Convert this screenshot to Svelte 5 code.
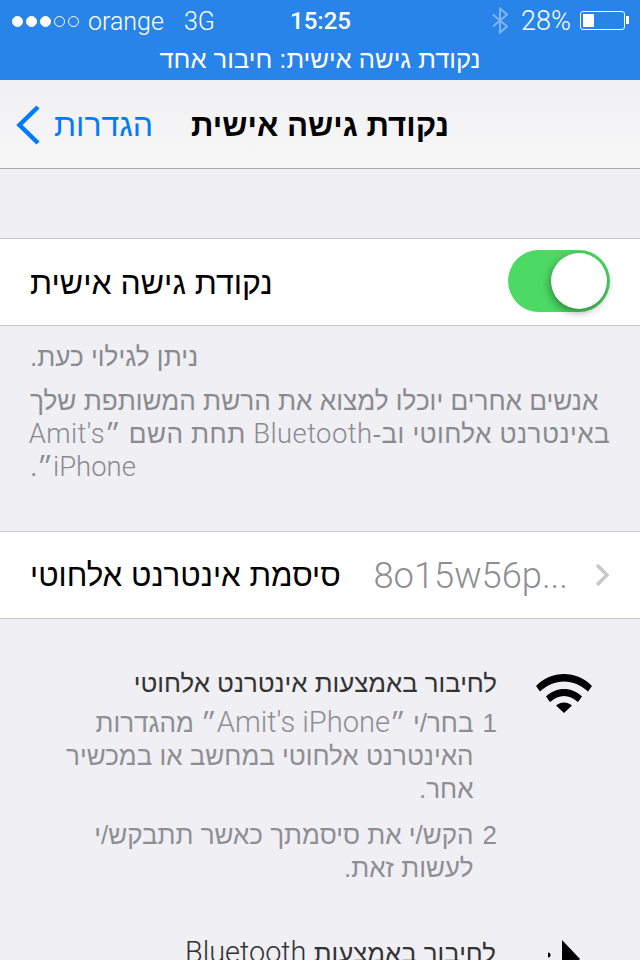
<div class="screen">
  <header class="status">
    <div class="status-left">
      <span class="signal">
        {#each [1, 2, 3, 4, 5] as n}
          <i class:on={n <= 3}></i>
        {/each}
      </span>
      <span class="carrier">orange</span>
      <span class="network">3G</span>
    </div>
    <div class="clock">15:25</div>
    <div class="status-right">
      <svg class="bt" width="16" height="27" viewBox="0 0 16 27" fill="none" stroke="#fff" stroke-width="2">
        <path d="M1 7.5 L15 19.5 L8 25.5 V1.5 L15 7.5 L1 19.5" />
      </svg>
      <span class="percent">28%</span>
      <span class="battery"><b></b></span>
    </div>
  </header>

  <div class="tether" dir="rtl">נקודת גישה אישית: חיבור אחד</div>

  <nav class="navbar">
    <div class="back">
      <svg width="26" height="40" viewBox="0 0 26 40" fill="none" stroke="#007aff" stroke-width="4.5">
        <path d="M23 2 L4.5 20 L23 38" />
      </svg>
      <span dir="rtl">הגדרות</span>
    </div>
    <h1 dir="rtl">נקודת גישה אישית</h1>
  </nav>

  <section class="cell first">
    <div class="switch"><span class="knob"></span></div>
    <span class="cell-title" dir="rtl">נקודת גישה אישית</span>
  </section>

  <div class="notes" dir="rtl">
    <p>ניתן לגילוי כעת.</p>
    <p>אנשים אחרים יוכלו למצוא את הרשת המשותפת שלך<br /><span class="wide">באינטרנט אלחוטי וב-<span class="latin">Bluetooth</span> תחת השם ״<span class="latin">Amit's</span></span><br /><span class="latin">iPhone</span>״.</p>
  </div>

  <section class="cell second">
    <span class="cell-value">
      <svg width="16" height="24" viewBox="0 0 16 24" fill="none" stroke="#c7c7cc" stroke-width="3.5">
        <path d="M3 2 L13 12 L3 22" />
      </svg>
      <span class="value">8o15w56p...</span>
    </span>
    <span class="cell-title narrow" dir="rtl">סיסמת אינטרנט אלחוטי</span>
  </section>

  <section class="how">
    <div class="how-text" dir="rtl">
      <h2>לחיבור באמצעות אינטרנט אלחוטי</h2>
      <div class="step">
        <span class="num">1</span>
        <span class="lines">
          <span>בחר/י ״<span class="latin">Amit's iPhone</span>״ מהגדרות</span>
          <span>האינטרנט אלחוטי במחשב או במכשיר</span>
          <span>אחר.</span>
        </span>
      </div>
      <div class="step">
        <span class="num">2</span>
        <span class="lines">
          <span>הקש/י את סיסמתך כאשר תתבקש/י</span>
          <span>לעשות זאת.</span>
        </span>
      </div>
    </div>
    <svg class="wifi" width="56" height="42" viewBox="0 0 56 42" fill="#000">
      <path d="M0 15 C15 -1 41 -1 56 15 L52 20.5 C38 7 18 7 4 20.5 Z" />
      <path d="M10 25.5 C20 15.5 36 15.5 46 25.5 L42 31 C33 23 23 23 14 31 Z" />
      <path d="M20 34.5 C25 30.5 31 30.5 36 34.5 L28 42 Z" />
    </svg>
  </section>

  <section class="how last">
    <div class="how-text" dir="rtl">
      <h2>לחיבור באמצעות <span class="latin">Bluetooth</span></h2>
    </div>
    <svg class="bt-big" width="36" height="40" viewBox="0 0 36 40" fill="#000">
      <path d="M14 0 L32 19 L22 30 L14 30 Z" />
      <circle cx="0" cy="15" r="2.5" />
    </svg>
  </section>
</div>

<style>
  :global(body) {
    margin: 0;
    background: #efeff4;
  }

  .screen {
    width: 640px;
    height: 960px;
    overflow: hidden;
    background: #efeff4;
    font-family: "Liberation Sans", Arial, sans-serif;
    color: #000;
  }

  .latin {
    font-family: Roboto, "Liberation Sans", sans-serif;
    font-size: 1.12em;
    font-weight: 300;
    line-height: 1;
  }

  .status {
    display: grid;
    grid-template-columns: 1fr auto 1fr;
    align-items: center;
    box-sizing: border-box;
    height: 40px;
    padding: 2px 11px 0 12px;
    background: #2884e8;
    color: #fff;
    font-family: Roboto, "Liberation Sans", sans-serif;
    font-size: 25px;
    font-weight: 300;
  }

  .status-left {
    display: flex;
    align-items: center;
  }

  .signal {
    display: flex;
    gap: 3px;
    margin-right: 9px;
  }

  .signal i {
    box-sizing: border-box;
    width: 11px;
    height: 11px;
    border: 1px solid #fff;
    border-radius: 50%;
  }

  .signal i.on {
    background: #fff;
  }

  .network {
    margin-left: 20px;
  }

  .clock {
    font-size: 24px;
    font-weight: 500;
  }

  .status-right {
    display: flex;
    align-items: center;
    justify-content: flex-end;
  }

  .bt {
    margin-right: 13px;
    margin-top: -2px;
    opacity: 0.4;
  }

  .percent {
    margin-right: 9px;
    font-size: 27px;
  }

  .battery {
    position: relative;
    display: block;
    box-sizing: border-box;
    width: 45px;
    height: 19px;
    padding: 2px;
    border: 1px solid #fff;
    border-radius: 3px;
    margin-right: 4px;
    margin-top: -2px;
  }

  .battery b {
    display: block;
    width: 11px;
    height: 13px;
    background: #fff;
  }

  .battery::after {
    content: '';
    position: absolute;
    top: 4px;
    right: -5px;
    width: 3px;
    height: 8px;
    background: #fff;
  }

  .tether {
    height: 40px;
    background: #2884e8;
    color: #fff;
    font-size: 25.6px;
    line-height: 39px;
    text-align: center;
  }

  .navbar {
    position: relative;
    display: flex;
    align-items: center;
    justify-content: center;
    box-sizing: border-box;
    height: 89px;
    padding-top: 3px;
    border-bottom: 1px solid #a8a8ac;
    background: linear-gradient(#f0f0f2, #f7f7f8);
  }

  .back {
    position: absolute;
    left: 15px;
    top: 25px;
    display: flex;
    align-items: center;
    gap: 13px;
    color: #007aff;
    font-size: 32px;
  }

  h1 {
    margin: 0;
    font-size: 31.3px;
    font-weight: 700;
  }

  .cell {
    display: flex;
    flex-direction: row-reverse;
    align-items: center;
    justify-content: space-between;
    box-sizing: border-box;
    height: 88px;
    padding: 0 30px;
    border-top: 1px solid #c8c7cc;
    border-bottom: 1px solid #c8c7cc;
    background: #fff;
  }

  .first {
    margin-top: 69px;
  }

  .cell-title {
    padding-top: 2px;
    font-size: 32px;
  }

  .cell-title.narrow {
    font-size: 31.3px;
  }

  .switch {
    position: relative;
    width: 102px;
    height: 62px;
    margin-bottom: 2px;
    border-radius: 31px;
    background: #4cd964;
  }

  .knob {
    position: absolute;
    top: 3px;
    right: 3px;
    width: 56px;
    height: 56px;
    border-radius: 50%;
    background: #fff;
    box-shadow: -1px 3px 8px rgba(0, 0, 0, 0.4);
  }

  .notes {
    box-sizing: border-box;
    height: 205px;
    padding: 15px 30px 0;
    color: #8a8a8f;
    font-size: 26.15px;
    line-height: 33px;
  }

  .notes p {
    margin: 0 0 11px;
    text-align: left;
  }

  .notes .latin {
    font-size: 1.05em;
  }

  .wide {
    letter-spacing: 0.4px;
    white-space: nowrap;
  }

  .cell-value {
    display: flex;
    flex-direction: row-reverse;
    align-items: center;
    gap: 26px;
    color: #8e8e93;
    font-family: Roboto, "Liberation Sans", sans-serif;
    font-size: 36.3px;
    font-weight: 300;
  }

  .how {
    display: flex;
    justify-content: flex-end;
    padding: 46px 48px 0 0;
    gap: 39px;
  }

  .how-text {
    color: #8e8e93;
    font-size: 26px;
    line-height: 33px;
  }

  h2 {
    margin: 0 0 6px;
    color: #333;
    font-size: 25.8px;
    font-weight: 400;
    line-height: 36px;
  }

  .step {
    display: flex;
    gap: 9px;
    margin-bottom: 13px;
  }

  .lines {
    display: flex;
    flex-direction: column;
  }

  .wifi {
    margin-top: 6px;
  }

  .last {
    padding-top: 37px;
    padding-right: 56px;
    gap: 52px;
  }

  .bt-big {
    margin-top: 5px;
  }
</style>
